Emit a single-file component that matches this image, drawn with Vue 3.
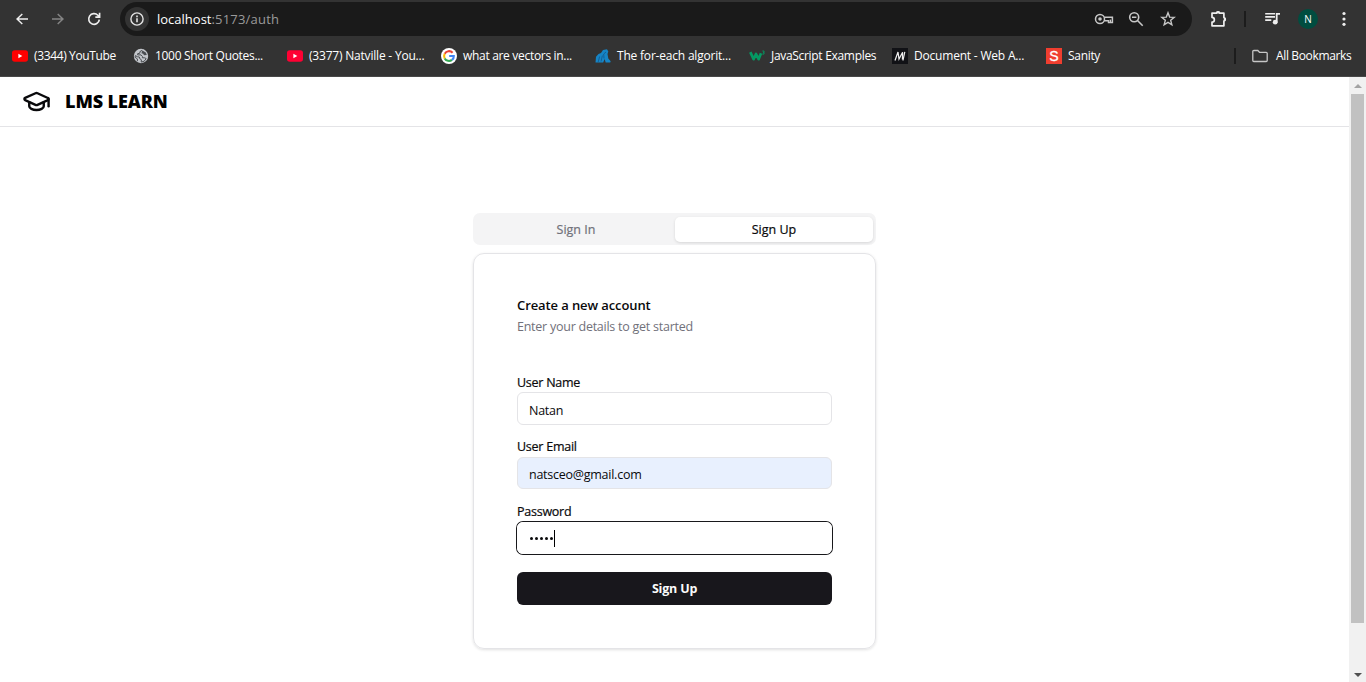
<script setup>
import { ref } from 'vue'

const bookmarks = [
  { icon: 'youtube', label: '(3344) YouTube', tone: 'snug' },
  { icon: 'globe', label: '1000 Short Quotes...', tone: 'base' },
  { icon: 'youtube-alt', label: '(3377) Natville - You...', tone: 'loose' },
  { icon: 'google', label: 'what are vectors in...', tone: 'base' },
  { icon: 'beast', label: 'The for-each algorit...', tone: 'loose' },
  { icon: 'w3', label: 'JavaScript Examples', tone: 'base' },
  { icon: 'mdn', label: 'Document - Web A...', tone: 'loose' },
  { icon: 'sanity', label: 'Sanity', tone: 'base' },
]
const activeTab = ref('Sign Up')
const tabs = ['Sign In', 'Sign Up']
</script>

<template>
  <div class="window">
    <div class="toolbar">
      <svg class="nav" viewBox="0 0 24 24"><path d="M21 10.9H7.3l5.9-5.7L11.7 3.6 3 12l8.7 8.4 1.5-1.6-5.9-5.7H21z" fill="#eee" /></svg>
      <svg class="nav" viewBox="0 0 24 24"><path d="M3 10.9h13.7l-5.9-5.7 1.5-1.6L21 12l-8.7 8.4-1.5-1.6 5.9-5.7H3z" fill="#858585" /></svg>
      <svg class="nav" viewBox="0 0 24 24"><path d="M20 13A8 8 0 1 1 17.8 6.4L20 8.6M20.4 2.8V9.2H14" fill="none" stroke="#eee" stroke-width="2.5" /></svg>
      <div class="omnibox">
        <span class="site">
          <svg width="16" height="16" viewBox="0 0 16 16"><circle cx="8" cy="8" r="6.1" fill="none" stroke="#e4e4e4" stroke-width="1.4" /><path d="M7.2 7.2h1.6v4H7.2zM7.2 4.6h1.6v1.6H7.2z" fill="#e4e4e4" /></svg>
        </span>
        <span class="url"><span class="host">localhost</span>:5173/auth</span>
        <span class="actions">
          <svg width="20" height="16" viewBox="0 0 20 16"><circle cx="6" cy="8" r="4.5" fill="none" stroke="#c7c7c7" stroke-width="1.5" /><circle cx="6" cy="8" r="1.8" fill="#c7c7c7" /><path d="M10.3 6.2H18.4V11.4H14.5V9.7H10.3" fill="none" stroke="#c7c7c7" stroke-width="1.5" /><path d="M16.4 8.6v2.5" stroke="#c7c7c7" stroke-width="1.4" /></svg>
          <svg width="16" height="16" viewBox="0 0 16 16"><circle cx="6.2" cy="6.2" r="4.5" fill="none" stroke="#c7c7c7" stroke-width="1.6" /><path d="M9.5 9.5 14.7 14.7M4 6.2h4.4" fill="none" stroke="#c7c7c7" stroke-width="1.6" /></svg>
          <svg width="16" height="16" viewBox="0 0 16 16"><path d="m8 1.8 1.65 4.3 4.6.25-3.55 2.95 1.15 4.5L8 11.3l-3.85 2.5 1.15-4.5L1.75 6.35l4.6-.25z" fill="none" stroke="#c7c7c7" stroke-width="1.4" /></svg>
        </span>
      </div>
      <svg class="puzzle" width="18" height="18" viewBox="0 0 18 18"><path d="M2 3.2H6.3a1.8 1.8 0 0 1 3.5 0H13.9V7.5a1.8 1.8 0 0 1 0 3.5V15.8H2V12a2.3 2.3 0 0 0 0-4.7z" fill="none" stroke="#eee" stroke-width="1.7" stroke-linejoin="round" /><path d="M6.3 3.5V2.6a1.8 1.8 0 0 1 3.5 0v.9zM13.8 7.5h.8a1.8 1.8 0 0 1 0 3.5h-.8z" fill="#eee" /></svg>
      <i class="sep"></i>
      <svg class="media" width="18" height="16" viewBox="0 0 18 16"><path d="M1.2 2.8H11M1.2 5.9H11M1.2 9.1H7.3" stroke="#eee" stroke-width="1.6" /><path d="M12.7 11.4V2.9H16" fill="none" stroke="#eee" stroke-width="1.8" /><circle cx="11.2" cy="11.2" r="2.4" fill="#eee" /></svg>
      <span class="avatar">N</span>
      <svg class="dots" width="4" height="16" viewBox="0 0 4 16"><circle cx="2" cy="2.5" r="1.6" fill="#eee" /><circle cx="2" cy="8" r="1.6" fill="#eee" /><circle cx="2" cy="13.3" r="1.6" fill="#eee" /></svg>
    </div>

    <div class="bookbar">
      <div class="books">
        <span v-for="b in bookmarks" :key="b.label" class="book">
          <svg v-if="b.icon.startsWith('youtube')" width="16" height="16" viewBox="0 0 16 16"><rect x="0" y="2.2" width="16" height="11.6" rx="2.8" :fill="b.icon === 'youtube' ? '#f00' : '#ff0033'" /><path d="M6.4 5.8v4.4L10.3 8z" fill="#fff" /></svg>
          <svg v-else-if="b.icon === 'globe'" width="16" height="16" viewBox="0 0 16 16"><circle cx="8" cy="8" r="7.2" fill="#c3c6cb" /><path d="M9.2 2.3 6.9 3.6v1.6L4.6 5.7v1.2H8l1.4 1.5v1.4h2.2l1.6.8-2 2.6-3 .9.2-2.3-1.8-1.3L6.4 9 4.6 8.8 2.3 7.6 2.1 9.3l2.3 1.6v2.2" fill="none" stroke="#4b4e52" stroke-width="1" /><path d="M9.4 2.5 12.8 4.4 13.8 7 11 7.3 10.2 5.8 8.4 5.2z" fill="#4b4e52" /></svg>
          <svg v-else-if="b.icon === 'google'" width="16" height="16" viewBox="0 0 16 16"><circle cx="8" cy="8" r="8" fill="#fff" /><g fill="none" stroke-width="2.1"><path d="M11.6 4.7A4.9 4.9 0 0 0 3.7 5.7" stroke="#ea4335" /><path d="M3.7 5.7a4.9 4.9 0 0 0 0 4.7" stroke="#fbbc05" /><path d="M3.7 10.4a4.9 4.9 0 0 0 7.3 1.5" stroke="#34a853" /><path d="M11 11.9A4.6 4.6 0 0 0 12.8 8H8.2" stroke="#4285f4" /></g></svg>
          <svg v-else-if="b.icon === 'beast'" width="16" height="16" viewBox="0 0 16 16"><path d="M.5 14.5 1 8.8 3.5 6 6 5l2-3 4-.8 1.3 2.2L12.5 6l.8 4.5 2.4 2.7-.5 1.3h-4.5L9.6 11 8.2 14.5z" fill="#1684c5" /><path d="M3.2 14 4.6 8.5M6 13.5 7.4 7.5M9 10.5 8.7 6l2.3-2" fill="none" stroke="#125b91" stroke-width=".9" /></svg>
          <svg v-else-if="b.icon === 'w3'" width="16" height="16" viewBox="0 0 16 16"><path d="M1.3 4.2 4.6 11.2 7 6 9.6 11.2 12 5.2" fill="none" stroke="#059862" stroke-width="2.7" stroke-linejoin="round" /><path d="M13.4 3h1.6v1.4h-1M15 4.4v1.7h-1.7" fill="none" stroke="#059862" stroke-width=".9" /></svg>
          <svg v-else-if="b.icon === 'mdn'" width="16" height="16" viewBox="0 0 16 16"><path d="M0 0h16v16H0z" fill="#111216" /><path d="M3 12.5 6 4 7 11 10.6 4.2 10.4 11.5M12.8 3.8 11 12.5" fill="none" stroke="#eee" stroke-width="1.2" /></svg>
          <span v-else class="sanity">S</span>
          <span :class="['label', b.tone]">{{ b.label }}</span>
        </span>
      </div>
      <i class="sep"></i>
      <svg width="16" height="14" viewBox="0 0 16 14"><path d="M.8 2.5a1 1 0 0 1 1-1h4l1.7 1.8h6.7a1 1 0 0 1 1 1v7.2a1 1 0 0 1-1 1H1.8a1 1 0 0 1-1-1z" fill="none" stroke="#c7c7c7" stroke-width="1.3" /></svg>
      <span class="label snug">All Bookmarks</span>
    </div>

    <div class="viewport">
      <div class="page">
        <header class="head">
          <svg width="29" height="29" viewBox="0 0 24 24" fill="none" stroke="#09090b" stroke-width="2" stroke-linecap="round" stroke-linejoin="round"><path d="M21.42 10.922a1 1 0 0 0-.019-1.838L12.83 5.18a2 2 0 0 0-1.66 0L2.6 9.08a1 1 0 0 0 0 1.832l8.57 3.908a2 2 0 0 0 1.66 0z" /><path d="M22 10v6" /><path d="M6 12.5V16a6 3 0 0 0 12 0v-3.5" /></svg>
          <span class="brand">LMS LEARN</span>
        </header>
        <main class="auth">
          <div class="tabs">
            <button v-for="t in tabs" :key="t" :class="['tab', { active: t === activeTab }]" @click="activeTab = t">{{ t }}</button>
          </div>
          <section class="card">
            <h3>Create a new account</h3>
            <p>Enter your details to get started</p>
            <div class="fields">
              <div class="field">
                <label>User Name</label>
                <div class="input">Natan</div>
              </div>
              <div class="field">
                <label>User Email</label>
                <div class="input filled">natsceo@gmail.com</div>
              </div>
              <div class="field">
                <label>Password</label>
                <div class="input focus"><span class="bullets"><i v-for="n in 5" :key="n"></i></span><i class="caret"></i></div>
              </div>
            </div>
            <button class="submit">Sign Up</button>
          </section>
        </main>
      </div>
      <div class="scroll">
        <i class="up"></i>
        <i class="thumb"></i>
        <i class="down"></i>
      </div>
    </div>
  </div>
</template>

<style>
body { margin: 0; overflow: hidden; background: #fff; }
</style>

<style scoped>
* { box-sizing: border-box; }
.window { width: 1366px; height: 682px; display: flex; flex-direction: column; font-family: "Open Sans", "Noto Sans", sans-serif; color: #09090b; }
svg { display: block; flex: none; }
button { font: inherit; border: 0; padding: 0; }

.toolbar { height: 38px; background: #333; display: flex; align-items: center; padding-left: 14px; }
.nav { width: 16px; height: 16px; margin-right: 20px; }
.nav:nth-child(3) { margin-right: 18px; }
.omnibox { width: 1072px; height: 34px; border-radius: 17px; background: #1a1a1a; display: flex; align-items: center; padding: 0 16px 0 5px; }
.site { width: 24px; height: 24px; border-radius: 50%; background: #333; display: grid; place-items: center; margin-right: 8px; }
.url { font-size: 13px; line-height: 18px; color: #9a9a9a; letter-spacing: 0.2px; }
.host { color: #fff; letter-spacing: 0; }
.actions { margin-left: auto; display: flex; align-items: center; }
.actions svg:nth-child(2) { margin-left: 14px; }
.actions svg:nth-child(3) { margin-left: 16px; }
.puzzle { margin-left: 18px; }
.sep { width: 2px; height: 16px; background: #1c1c1c; flex: none; }
.toolbar .sep { margin-left: 16px; }
.media { margin-left: 18px; }
.avatar { margin-left: 16px; width: 20px; height: 20px; border-radius: 50%; background: #004d40; color: #fff; font-size: 10px; line-height: 20px; text-align: center; }
.dots { margin-left: 24px; }

.bookbar { height: 39px; background: #333; border-bottom: 1px solid #484848; display: flex; align-items: center; padding: 0 0 2px 12px; }
.books { width: 1222px; display: grid; grid-template-columns: 121px 154px 154px 154px 154px 143px 154px 70px; }
.book { display: flex; align-items: center; gap: 6px; }
.label { font-size: 12px; line-height: 18px; color: #fff; white-space: nowrap; letter-spacing: -0.31px; }
.snug { letter-spacing: -0.36px; }
.loose { letter-spacing: -0.2px; }
.sanity { width: 16px; height: 16px; background: #f03e2f; color: #fff; font: 14px/16px "Liberation Sans", sans-serif; text-align: center; -webkit-text-stroke: 0.3px; }
.bookbar > svg { margin: 0 8px 0 16px; }

.viewport { flex: 1; display: flex; min-height: 0; }
.page { flex: 1; background: #fff; }
.head { height: 50px; border-bottom: 1px solid #e4e4e7; display: flex; align-items: center; padding-left: 22px; }
.brand { margin: -2px 0 0 14px; font-size: 18px; line-height: 24px; font-weight: 800; letter-spacing: -0.1px; color: #000; white-space: nowrap; }
.auth { width: 403px; margin: 86px 0 0 473px; }
.tabs { height: 32px; background: #f4f4f5; border-radius: 7px; padding: 4px 2px 2px 4px; display: grid; grid-template-columns: 198px 198px; }
.tab { background: none; color: #71717a; border-radius: 5px; font-size: 12.5px; line-height: 18px; height: 25px; -webkit-text-stroke: 0.2px; }
.tab.active { background: #fff; color: #09090b; box-shadow: 0 1px 3px rgba(0,0,0,.12); }
.card { height: 396px; margin-top: 8px; border: 1px solid #e4e4e7; border-radius: 11px; box-shadow: 0 1px 3px rgba(0,0,0,.12); padding: 42px 43px 0; }
h3, p { margin: 0; white-space: nowrap; }
h3 { font-size: 13px; font-weight: 600; line-height: 18px; letter-spacing: -0.1px; }
p { margin-top: 4px; font-size: 12.5px; line-height: 18px; letter-spacing: -0.25px; color: #71717a; }
.fields { margin-top: 38px; }
.field { height: 65px; display: flex; flex-direction: column; }
.field:first-child { height: 64px; }
.field label { display: block; height: 19px; font-size: 12.5px; line-height: 17.4px; letter-spacing: -0.25px; white-space: nowrap; -webkit-text-stroke: 0.2px; }
.field:first-child label { height: 18px; }
.input { height: 32px; border: 1px solid #e4e4e7; border-radius: 6px; padding: 3px 11px 0; display: flex; align-items: center; font-size: 12.5px; letter-spacing: -0.25px; }
.field:first-child .input { height: 33px; }
.filled { background: #e8f0fe; }
.focus { box-shadow: 0 0 0 1px #18181b; border-color: #fff; padding-top: 0; }
.bullets { display: flex; gap: 2px; padding-left: 1px; }
.bullets i { width: 3px; height: 3px; border-radius: 50%; background: #09090b; }
.caret { width: 1px; height: 17px; background: #000; margin-left: 1px; }
.submit { display: block; width: 100%; height: 33px; margin-top: 4px; background: #18171c; color: #fafafa; border-radius: 6px; font-size: 12.5px; font-weight: 700; letter-spacing: -0.2px; }

.scroll { width: 17px; background: #f1f1f1; display: flex; flex-direction: column; align-items: center; }
.up { margin-top: 7px; border: 4px solid transparent; border-top: 0; border-bottom-color: #a3a3a3; }
.thumb { margin-top: 6px; width: 13px; height: 529px; background: #c1c1c1; }
.down { margin-top: auto; margin-bottom: 5px; border: 4px solid transparent; border-bottom: 0; border-top-color: #505050; }
</style>
